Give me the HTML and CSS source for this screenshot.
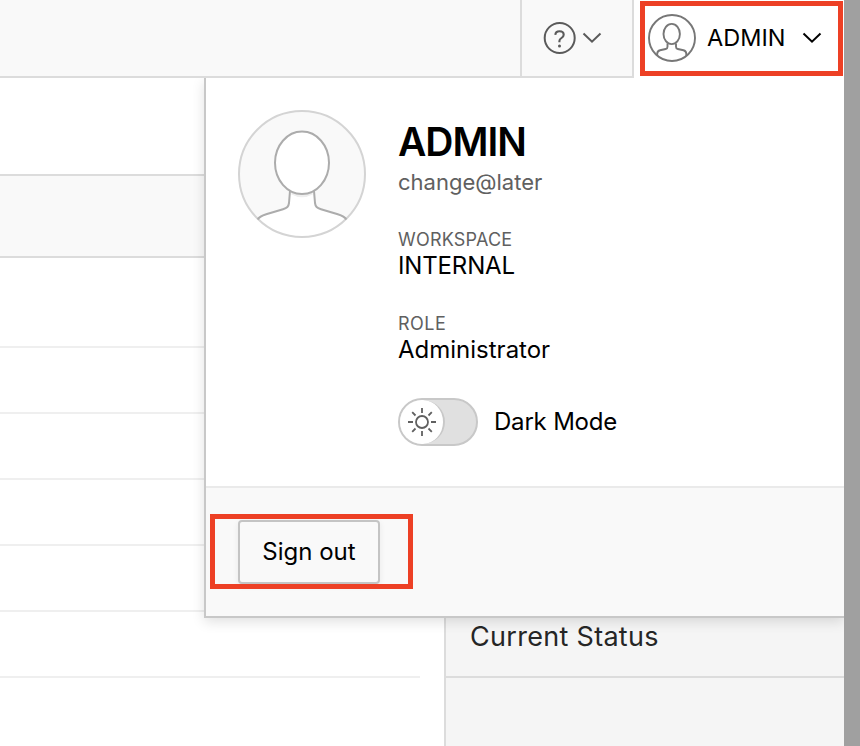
FILE: index.html
```html
<!DOCTYPE html>
<html lang="en">
<head>
<meta charset="utf-8">
<title>Administration</title>
<link rel="stylesheet" href="styles.css">
</head>
<body>
<div class="app">
  <header class="header">
    <button class="help" aria-label="Help">
      <svg width="34" height="34" viewBox="0 0 34 34" fill="none" stroke="#5a5a5a" stroke-width="2"><circle cx="16.700" cy="17" r="15"/><path d="M12.300 13.800c.2-2.200 1.900-3.500 4.200-3.500 2.400 0 4.200 1.400 4.200 3.500 0 3.300-4.300 3.100-4.300 6.200v1.200" stroke-width="2.100"/><circle cx="16.500" cy="25" r="1.500" fill="#5a5a5a" stroke="none"/></svg>
      <svg width="20" height="12" viewBox="0 0 20 12" fill="none" stroke="#5a5a5a" stroke-width="2"><path d="M1.500 1.500 10 9.700l8.500-8.200"/></svg>
    </button>
    <button class="account">
      <svg width="48" height="48" viewBox="0 0 48 48" fill="none" stroke="#777" stroke-width="1.900"><circle cx="24" cy="24" r="23"/><ellipse cx="23.700" cy="20" rx="8.200" ry="10.100"/><path d="M19.500 29.500v3.200c0 1.300-.6 2-1.800 2.300l-5.700 1.300c-2 .5-2.700 1.500-2.800 3.500v2M28 29.500v3.200c0 1.300.6 2 1.800 2.300l5.700 1.300c2 .5 2.700 1.500 2.800 3.500v2"/></svg>
      <span class="account-name">ADMIN</span>
      <svg width="20" height="12" viewBox="0 0 20 12" fill="none" stroke="#000" stroke-width="2"><path d="M1.500 1.500 10 9.700l8.500-8.200"/></svg>
    </button>
  </header>
  <main class="content">
    <div class="list">
      <div class="toolbar-space"></div>
      <div class="band"></div>
      <div class="row first"></div>
      <div class="row"></div>
      <div class="row"></div>
      <div class="row"></div>
      <div class="row"></div>
      <div class="row"></div>
    </div>
    <aside class="side"><h2 class="side-title">Current Status</h2></aside>
  </main>
  <section class="popup">
    <div class="profile">
      <svg width="128" height="128" viewBox="0 0 128 128" fill="none"><circle cx="64" cy="64" r="63" fill="#f9f9f9"/><path d="M20 109c2-3 6-4 9-5l17-5c4-1 5-3 5.200-6L52 80h24l.8 13c.2 3 1.200 5 5.200 6l17 5c3 1 7 2 9 5A63 63 0 0 1 20 109z" fill="#fff"/><circle cx="64" cy="64" r="63" stroke="#d4d4d4" stroke-width="2"/><path d="M19.700 109.500c1.800-3.500 6-4.500 9.300-5.500l16-4.800c4.200-1.300 5.500-2.500 6-6.200l1-12M108.300 109.500c-1.800-3.500-6-4.500-9.300-5.500l-16-4.800c-4.200-1.300-5.500-2.500-6-6.200l-1-12" stroke="#acacac" stroke-width="2"/><path d="M54 82.500q10 5.500 20 0" stroke="#eee" stroke-width="4"/><ellipse cx="64" cy="52.800" rx="27" ry="31.200" fill="#fff" stroke="#acacac" stroke-width="2"/></svg>
      <div class="details">
        <h1 class="name">ADMIN</h1>
        <div class="email">change@later</div>
        <div class="label">WORKSPACE</div>
        <div class="value internal">INTERNAL</div>
        <div class="label role">ROLE</div>
        <div class="value">Administrator</div>
        <div class="mode">
          <span class="switch"><span class="knob"><svg width="28" height="28" viewBox="0 0 28 28" fill="none" stroke="#606060" stroke-width="1.800"><circle cx="14" cy="14" r="6"/><path d="M14 0v5M14 23v5M0 14h5M23 14h5M4.200 4.200l3.300 3.300M20.500 20.500l3.300 3.300M4.200 23.800l3.300-3.300M20.500 7.500l3.300-3.300"/></svg></span></span>
          <span class="mode-label">Dark Mode</span>
        </div>
      </div>
    </div>
    <footer class="popup-footer"><button class="signout">Sign out</button></footer>
  </section>
  <div class="highlight highlight-account"></div>
  <div class="highlight highlight-signout"></div>
</div>
</body>
</html>
```
FILE: styles.css
```css
* { box-sizing: border-box; }
body { margin: 0; background: #a0a0a0; font-family: Inter, "Liberation Sans", sans-serif; color: #000; }
button { font: inherit; color: inherit; margin: 0; }
svg { display: block; flex: none; }
.app { position: relative; width: 844px; height: 746px; background: #fff; overflow: hidden; }
.header { display: flex; justify-content: flex-end; height: 78px; background: #f9f9f9; box-shadow: inset 0 -2px #dcdcdc; }
.help { display: flex; align-items: center; gap: 5px; width: 114px; padding: 0 0 0 21px; border: solid #dcdcdc; border-width: 0 2px 2px; background: #f9f9f9; }
.account { display: flex; align-items: center; width: 210px; padding: 0 0 2px 14px; border: 0; background: #fff; }
.account-name { width: 95px; margin: 0 0 0 11px; padding-bottom: 2px; text-align: left; font-size: 23.500px; white-space: nowrap; }
.content { display: flex; justify-content: space-between; height: 668px; }
.list { width: 420px; }
.toolbar-space { height: 98px; border-bottom: 2px solid #dcdcdc; }
.band { height: 82px; background: #f9f9f9; border-bottom: 2px solid #dcdcdc; }
.row { height: 66px; border-bottom: 2px solid #efefef; }
.row.first { height: 90px; }
.side { width: 400px; border-left: 2px solid #dcdcdc; background: #f5f5f5; }
.side-title { display: flex; align-items: flex-end; height: 600px; margin: 0; padding: 0 0 22px 24px; border-bottom: 2px solid #dcdcdc; color: #262626; font-size: 27px; line-height: 34px; font-weight: 400; letter-spacing: .3px; }
.popup { position: absolute; top: 78px; right: 0; display: flex; flex-direction: column; width: 640px; height: 540px; border: solid #c8c8c8; border-width: 0 0 2px 2px; background: #fff; box-shadow: 0 4px 12px rgba(0,0,0,.12); clip-path: inset(0 0 -24px -24px); }
.profile { display: flex; gap: 32px; height: 408px; padding: 32px; }
.details { padding-top: 8px; white-space: nowrap; }
.name { margin: 0; font-size: 39px; line-height: 48px; font-weight: 600; letter-spacing: -1px; }
.email { color: #606060; font-size: 22px; line-height: 32px; }
.label { margin-top: 30px; color: #606060; font-size: 18px; line-height: 24px; letter-spacing: .2px; }
.value { font-size: 24px; line-height: 28px; }
.value.internal { letter-spacing: -.15px; }
.label.role { margin-top: 32px; letter-spacing: .5px; }
.mode { display: flex; align-items: center; gap: 16px; margin-top: 34px; }
.switch { width: 80px; height: 48px; border: 2px solid #c8c8c8; border-radius: 24px; background: #e0e0e0; }
.knob { display: grid; place-items: center; width: 45px; height: 44px; border-right: 2px solid #c8c8c8; border-radius: 22px; background: #fff; }
.mode-label { font-size: 24px; line-height: 32px; letter-spacing: -.2px; }
.popup-footer { flex: 1; padding: 32px; border-top: 2px solid #eaeaea; background: #f9f9f9; }
.signout { display: block; width: 142px; height: 64px; padding: 0 0 2px; border: 2px solid #c4c4c4; border-radius: 4px; background: #f9f9f9; box-shadow: 0 2px 6px rgba(0,0,0,.07); font-size: 24px; }
.highlight { position: absolute; border: 5px solid #ed4025; pointer-events: none; }
.highlight-account { left: 640px; top: 1px; width: 203px; height: 75px; }
.highlight-signout { left: 210px; top: 514px; width: 203px; height: 75px; }
```
